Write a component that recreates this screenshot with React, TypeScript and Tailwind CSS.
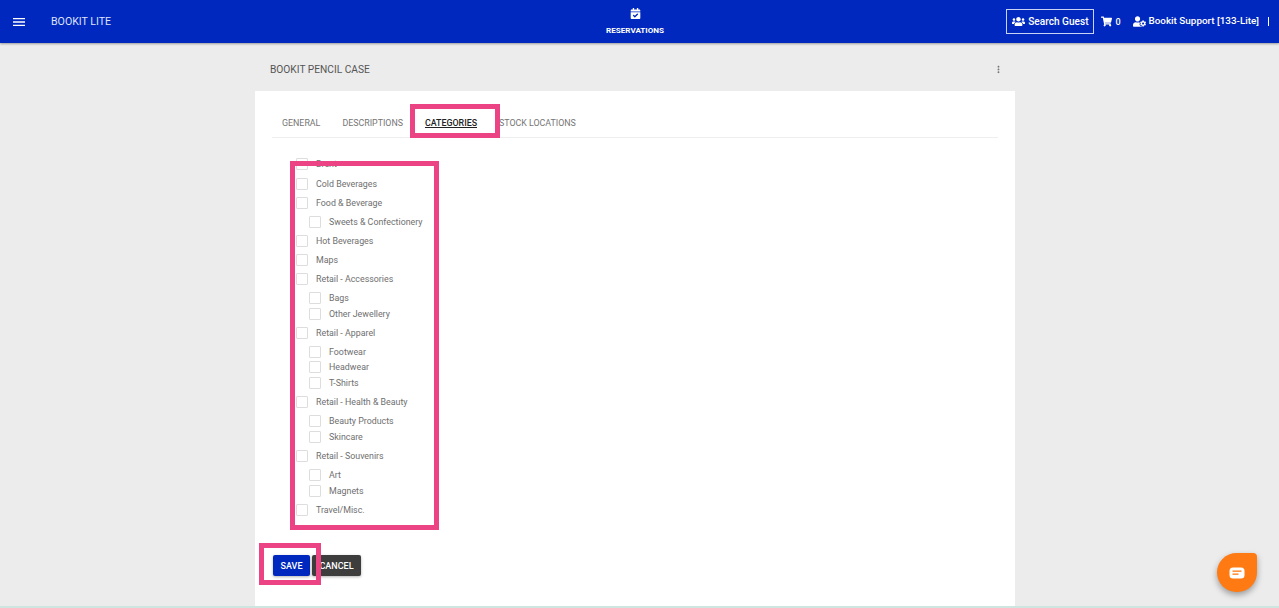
import { FaCalendarCheck, FaShoppingCart, FaUserCog, FaUsers } from 'react-icons/fa';
import { MdMenu, MdMoreVert } from 'react-icons/md';

const categories = [
  { name: 'Brent', child: false, mt: '' },
  { name: 'Cold Beverages', child: false, mt: 'mt-[8px]' },
  { name: 'Food & Beverage', child: false, mt: 'mt-[7px]' },
  { name: 'Sweets & Confectionery', child: true, mt: 'mt-[7px]' },
  { name: 'Hot Beverages', child: false, mt: 'mt-[7px]' },
  { name: 'Maps', child: false, mt: 'mt-[7px]' },
  { name: 'Retail - Accessories', child: false, mt: 'mt-[7px]' },
  { name: 'Bags', child: true, mt: 'mt-[7px]' },
  { name: 'Other Jewellery', child: true, mt: 'mt-[4px]' },
  { name: 'Retail - Apparel', child: false, mt: 'mt-[7px]' },
  { name: 'Footwear', child: true, mt: 'mt-[7px]' },
  { name: 'Headwear', child: true, mt: 'mt-[3px]' },
  { name: 'T-Shirts', child: true, mt: 'mt-[4px]' },
  { name: 'Retail - Health & Beauty', child: false, mt: 'mt-[7px]' },
  { name: 'Beauty Products', child: true, mt: 'mt-[7px]' },
  { name: 'Skincare', child: true, mt: 'mt-[4px]' },
  { name: 'Retail - Souvenirs', child: false, mt: 'mt-[7px]' },
  { name: 'Art', child: true, mt: 'mt-[7px]' },
  { name: 'Magnets', child: true, mt: 'mt-[4px]' },
  { name: 'Travel/Misc.', child: false, mt: 'mt-[7px]' },
];

const tabs = ['GENERAL', 'DESCRIPTIONS', 'CATEGORIES', 'STOCK LOCATIONS'];

export default function App() {
  return (
    <div className="relative flex h-[608px] w-[1279px] flex-col overflow-hidden bg-[#ececec] font-['Roboto',sans-serif]">
      <header className="z-10 flex h-[43px] shrink-0 items-center bg-[#0028be] text-white shadow-[0_1px_2px_rgba(0,0,0,0.35)]">
        <div className="flex w-[606px] items-center">
          <MdMenu className="ml-[11px] text-[16px]" />
          <span className="ml-[24px] text-[10.6px] text-[#dfe4f8]">BOOKIT LITE</span>
        </div>
        <div className="flex w-[58px] flex-col items-center pt-[2px]">
          <FaCalendarCheck className="text-[11px]" />
          <span className="mt-[5px] text-[8.1px] font-bold whitespace-nowrap">RESERVATIONS</span>
        </div>
        <div className="ml-auto flex items-center pr-[10px]">
          <div className="flex h-[25px] w-[88px] items-center justify-center gap-[3px] border border-[#c9d2f2] text-[10.1px] font-medium">
            <FaUsers className="text-[13px]" />
            <span>Search Guest</span>
          </div>
          <FaShoppingCart className="ml-[7px] text-[11px]" />
          <span className="mt-[2px] ml-[3px] text-[9px] font-medium">0</span>
          <FaUserCog className="ml-[12px] text-[13px]" />
          <span className="ml-[3px] text-[9.9px] font-medium">Bookit Support [133-Lite]</span>
          <span className="ml-[9px] h-[9px] w-px bg-white" />
        </div>
      </header>

      <main className="ml-[255px] flex w-[760px] flex-1 flex-col">
        <div className="flex h-[48px] items-center justify-between pt-[5px] pr-[11px] pl-[15px] text-[10.2px] text-[#555]">
          <span>BOOKIT PENCIL CASE</span>
          <MdMoreVert className="text-[11px] text-[#777]" />
        </div>
        <section className="flex-1 bg-white pt-[20px]">
          <div className="mx-[17px] flex h-[27px] border-b-[1.5px] border-[#eeeeee] pl-[10px] text-[8.85px] text-[#757575]">
            {tabs.map(tab =>
              tab === 'CATEGORIES' ? (
                <div key={tab} className="mr-[12px] -ml-[10px] flex h-[27px] w-[72px] justify-center border-b-2 border-[#6f94e8] pt-[6px] font-medium text-[#222]">
                  <span className="underline">{tab}</span>
                </div>
              ) : (
                <span key={tab} className="mr-[22px] pt-[6px]">
                  {tab}
                </span>
              ),
            )}
          </div>
          <ul className="mt-[20px] ml-[41px] flex flex-col text-[8.85px] text-[#6f6f6f]">
            {categories.map(item => (
              <li key={item.name} className={`flex h-[12px] items-center ${item.mt} ${item.child ? 'pl-[13px]' : ''}`}>
                <span className="h-[12px] w-[12px] shrink-0 rounded-[1px] border border-[#dddddd] bg-white" />
                <span className="ml-[8px] pt-[2px] whitespace-nowrap">{item.name}</span>
              </li>
            ))}
          </ul>
          <div className="mt-[39px] ml-[18px] flex gap-[2px] text-[9px] font-medium text-white">
            <button className="h-[21px] w-[37px] rounded-[2px] bg-[#0028be] pt-[2px] shadow-[0_1px_3px_rgba(0,0,0,0.3)]">SAVE</button>
            <button className="h-[21px] w-[49px] rounded-[2px] bg-[#3d3d3d] pt-[2px] shadow-[0_1px_3px_rgba(0,0,0,0.3)]">CANCEL</button>
          </div>
        </section>
      </main>

      <div className="h-[2px] shrink-0 bg-[#cfe6e0]" />

      {/* annotation boxes drawn over the screenshot */}
      <div className="absolute top-[104px] left-[410px] h-[34px] w-[90px] border-[5px] border-[#ec4384]" />
      <div className="absolute top-[161px] left-[290px] h-[369px] w-[149px] border-[5px] border-[#ec4384]" />
      <div className="absolute top-[543px] left-[259px] h-[42px] w-[62px] border-[5px] border-[#ec4384]" />

      <div className="absolute top-[553px] left-[1217px] flex h-[39px] w-[40px] items-center justify-center rounded-[20px] rounded-tr-[4px] bg-[#ff7a12] shadow-[0_3px_6px_rgba(0,0,0,0.35)]">
        <svg width="16" height="12" viewBox="0 0 16 12">
          <rect x="0.5" y="0.5" width="15" height="11" rx="3.5" fill="#fff" />
          <rect x="3.5" y="3.5" width="9" height="1.3" fill="#ff7a12" />
          <rect x="3.5" y="6.5" width="6" height="1.3" fill="#ff7a12" />
        </svg>
      </div>
    </div>
  );
}
